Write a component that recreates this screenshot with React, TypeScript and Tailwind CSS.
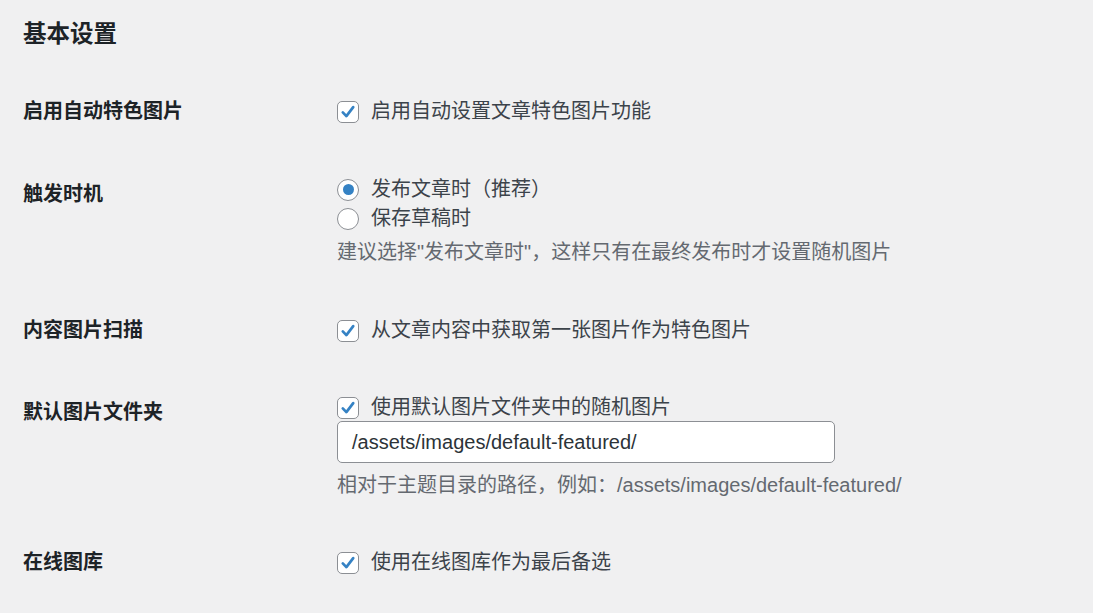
import React from "react";

const font = { fontFamily: '"Liberation Sans", "Noto Sans CJK SC", sans-serif' };

function Check() {
  return (
    <span className="flex h-[22px] w-[22px] shrink-0 items-center justify-center rounded-[5px] border border-[#8c8f94] bg-white">
      <svg width="18" height="18" viewBox="0 0 20 20">
        <path d="M4.2 10.4 L8.2 14.6 L15.8 4.6" fill="none" stroke="#3582c4" strokeWidth="3" strokeLinecap="round" strokeLinejoin="round" />
      </svg>
    </span>
  );
}

function Radio({ on }: { on?: boolean }) {
  return (
    <span className="flex h-[22px] w-[22px] shrink-0 items-center justify-center rounded-full border border-[#8c8f94] bg-white">
      {on && <span className="h-[11px] w-[11px] rounded-full bg-[#3582c4]" />}
    </span>
  );
}

function Label({ children, offset }: { children: React.ReactNode; offset?: boolean }) {
  return (
    <div className={`w-[314px] shrink-0 text-[20px] font-bold leading-[29px] text-[#1d2327] ${offset ? "pt-[5px]" : ""}`}>
      {children}
    </div>
  );
}

function CheckLine({ children }: { children: React.ReactNode }) {
  return (
    <div className="flex h-[29px] items-center gap-[12px] text-[20px] leading-[29px] text-[#3c434a]">
      <Check />
      <span>{children}</span>
    </div>
  );
}

function RadioLine({ children, on }: { children: React.ReactNode; on?: boolean }) {
  return (
    <div className="flex h-[29px] items-center gap-[12px] text-[20px] leading-[29px] text-[#3c434a]">
      <Radio on={on} />
      <span>{children}</span>
    </div>
  );
}

export default function App() {
  return (
    <div className="min-h-[613px] w-full bg-[#f0f0f1] pl-[23px] pt-[18px]" style={font}>
      <h2 className="text-[23.5px] font-bold leading-[32px] text-[#1d2327]">基本设置</h2>

      <div className="mt-[47px] flex items-start">
        <Label>启用自动特色图片</Label>
        <CheckLine>启用自动设置文章特色图片功能</CheckLine>
      </div>

      <div className="mt-[49px] flex items-start">
        <Label offset>触发时机</Label>
        <div className="flex flex-col">
          <RadioLine on>发布文章时（推荐）</RadioLine>
          <RadioLine>保存草稿时</RadioLine>
          <p className="mt-[5px] text-[20px] leading-[29px] text-[#646970]">
            建议选择"发布文章时"，这样只有在最终发布时才设置随机图片
          </p>
        </div>
      </div>

      <div className="mt-[49px] flex items-start">
        <Label>内容图片扫描</Label>
        <CheckLine>从文章内容中获取第一张图片作为特色图片</CheckLine>
      </div>

      <div className="mt-[48px] flex items-start">
        <Label offset>默认图片文件夹</Label>
        <div className="flex flex-col">
          <CheckLine>使用默认图片文件夹中的随机图片</CheckLine>
          <div className="-mt-[1px] flex h-[42px] w-[498px] items-center rounded-[5px] border border-[#8c8f94] bg-white pl-[14px] text-[20px] text-[#2c3338]">
            /assets/images/default-featured/
          </div>
          <p className="mt-[8px] text-[20px] leading-[29px] text-[#646970]">
            相对于主题目录的路径，例如：/assets/images/default-featured/
          </p>
        </div>
      </div>

      <div className="mt-[48px] flex items-start">
        <Label>在线图库</Label>
        <CheckLine>使用在线图库作为最后备选</CheckLine>
      </div>
    </div>
  );
}
